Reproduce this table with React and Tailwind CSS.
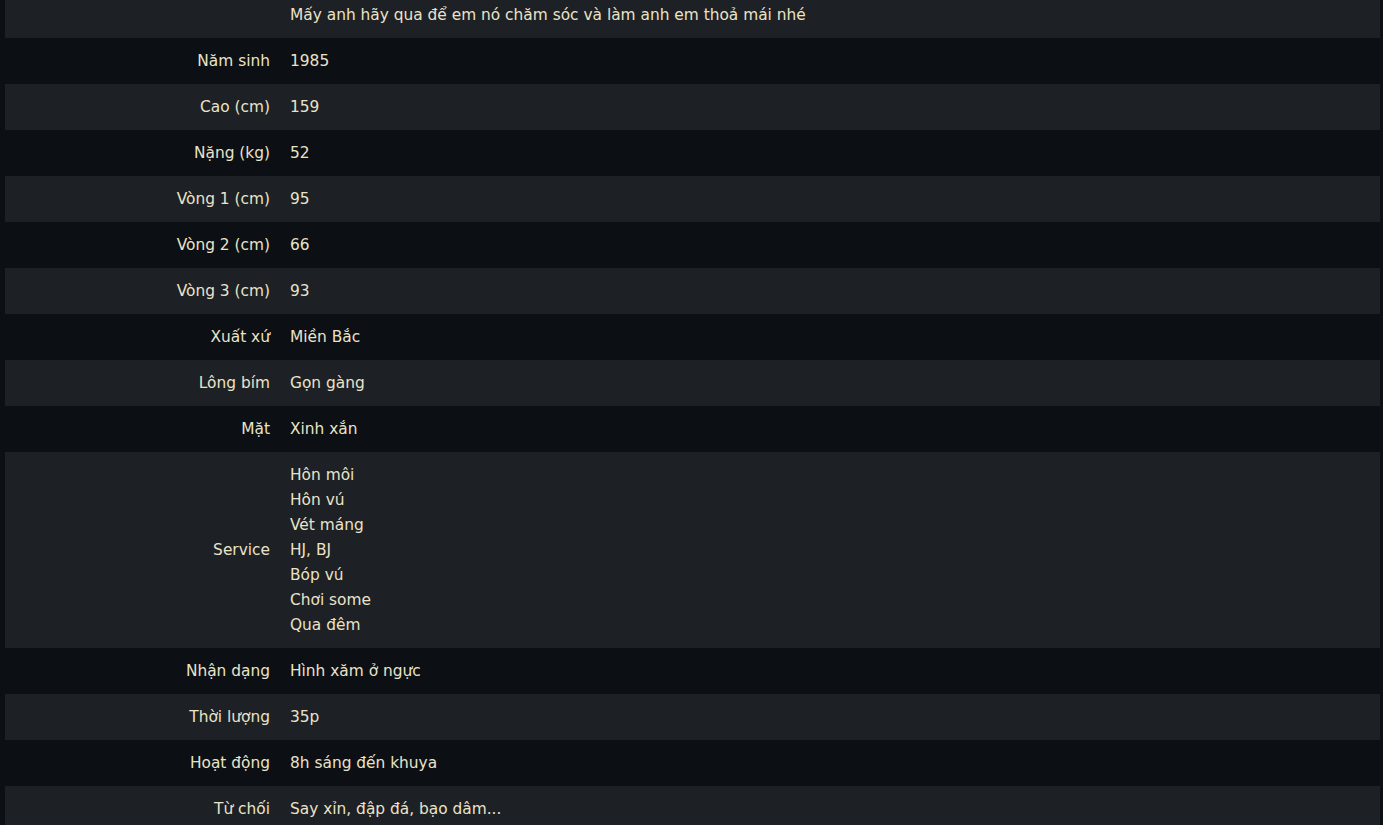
import React from "react";

const rows = [
  { label: "", value: ["Mấy anh hãy qua để em nó chăm sóc và làm anh em thoả mái nhé"] },
  { label: "Năm sinh", value: ["1985"] },
  { label: "Cao (cm)", value: ["159"] },
  { label: "Nặng (kg)", value: ["52"] },
  { label: "Vòng 1 (cm)", value: ["95"] },
  { label: "Vòng 2 (cm)", value: ["66"] },
  { label: "Vòng 3 (cm)", value: ["93"] },
  { label: "Xuất xứ", value: ["Miền Bắc"] },
  { label: "Lông bím", value: ["Gọn gàng"] },
  { label: "Mặt", value: ["Xinh xắn"] },
  {
    label: "Service",
    value: ["Hôn môi", "Hôn vú", "Vét máng", "HJ, BJ", "Bóp vú", "Chơi some", "Qua đêm"],
  },
  { label: "Nhận dạng", value: ["Hình xăm ở ngực"] },
  { label: "Thời lượng", value: ["35p"] },
  { label: "Hoạt động", value: ["8h sáng đến khuya"] },
  { label: "Từ chối", value: ["Say xỉn, đập đá, bạo dâm..."] },
];

const App = () => {
  return (
    <div className="h-[825px] overflow-hidden bg-[#0c0f13] pl-[5px] pr-[3px] font-['DejaVu_Sans',sans-serif] text-[15.4px] text-[#eae3c9]">
      <div className="-mt-[8px]">
        {rows.map((row, i) => (
          <div
            key={i}
            className={`flex items-center ${i % 2 === 0 ? "bg-[#1d2024]" : "bg-[#0c0f13]"}`}
          >
            <div className="w-[275px] shrink-0 pr-[10px] text-right leading-[25px]">
              {row.label}
            </div>
            <div className="flex-1 py-[10.5px] pl-[10px] leading-[25px]">
              {row.value.map((line, j) => (
                <div key={j}>{line}</div>
              ))}
            </div>
          </div>
        ))}
      </div>
    </div>
  );
};

export default App;
